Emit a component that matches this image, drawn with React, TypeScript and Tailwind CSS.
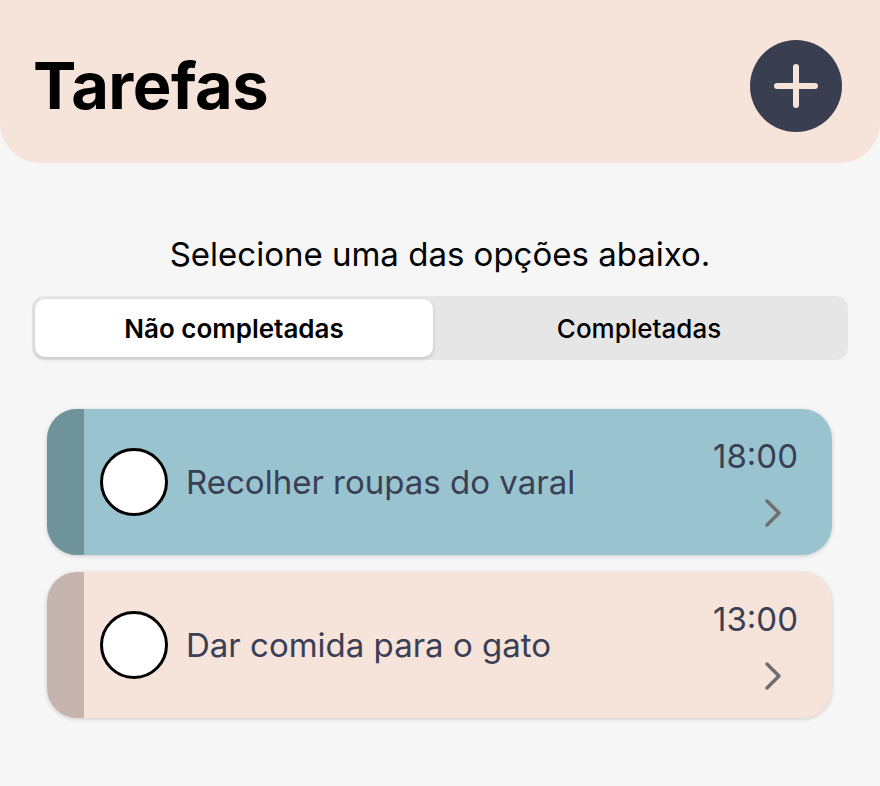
import React from "react";

function Check() {
  return (
    <div className="w-[68px] h-[68px] rounded-full border-[3px] border-black bg-white shrink-0" />
  );
}

function Chevron() {
  return (
    <svg width="22" height="32" viewBox="0 0 22 32" fill="none">
      <path d="M5 4 L17 16 L5 28" stroke="#6f6f6f" strokeWidth="3.5" strokeLinecap="round" strokeLinejoin="round" />
    </svg>
  );
}

function Card({ title, time, bg, strip }: { title: string; time: string; bg: string; strip: string }) {
  return (
    <div className={`flex h-[146px] rounded-[30px] overflow-hidden shadow-[0_1px_4px_rgba(0,0,0,0.18)] ${bg}`}>
      <div className={`w-[37px] shrink-0 ${strip}`} />
      <div className="flex-1 flex items-center pl-[16px] pr-[34px]">
        <Check />
        <div className="ml-[18px] text-[33px] text-[#3a3f55] leading-none">{title}</div>
        <div className="ml-auto self-stretch flex flex-col items-end pt-[31px]">
          <div className="text-[33px] text-[#3a3f55] leading-none">{time}</div>
          <div className="mt-[24px] mr-[14px]">
            <Chevron />
          </div>
        </div>
      </div>
    </div>
  );
}

export default function App() {
  return (
    <div className="w-[880px] h-[786px] bg-[#f6f6f6] overflow-hidden" style={{ fontFamily: "Inter, 'Liberation Sans', sans-serif" }}>
      <div className="h-[163px] bg-[#f6e3da] rounded-b-[40px] flex items-center justify-between pl-[33px] pr-[38px]">
        <div className="text-[65px] font-bold text-black tracking-[-0.5px] mt-[8px]">Tarefas</div>
        <div className="w-[92px] h-[92px] rounded-full bg-[#393e50] flex items-center justify-center mt-[8px]">
          <svg width="46" height="46" viewBox="0 0 46 46">
            <path d="M23 4 V42 M4 23 H42" stroke="#f6e3da" strokeWidth="6" strokeLinecap="round" />
          </svg>
        </div>
      </div>
      <div className="text-center text-[33px] text-black mt-[75px] leading-none">Selecione uma das opções abaixo.</div>
      <div className="mx-[32px] mt-[25px] h-[64px] bg-[#e6e6e6] rounded-[12px] flex p-[3px]">
        <div className="w-[398px] bg-white rounded-[10px] shadow-[0_2px_4px_rgba(0,0,0,0.15)] flex items-center justify-center text-[26px] font-semibold text-black">
          Não completadas
        </div>
        <div className="flex-1 flex items-center justify-center text-[26px] font-medium text-black">Completadas</div>
      </div>
      <div className="mx-[47px] mr-[48px] mt-[49px] flex flex-col gap-[17px]">
        <Card title="Recolher roupas do varal" time="18:00" bg="bg-[#98c3cf]" strip="bg-[#6e939b]" />
        <Card title="Dar comida para o gato" time="13:00" bg="bg-[#f6e3da]" strip="bg-[#c5b5ae]" />
      </div>
    </div>
  );
}
